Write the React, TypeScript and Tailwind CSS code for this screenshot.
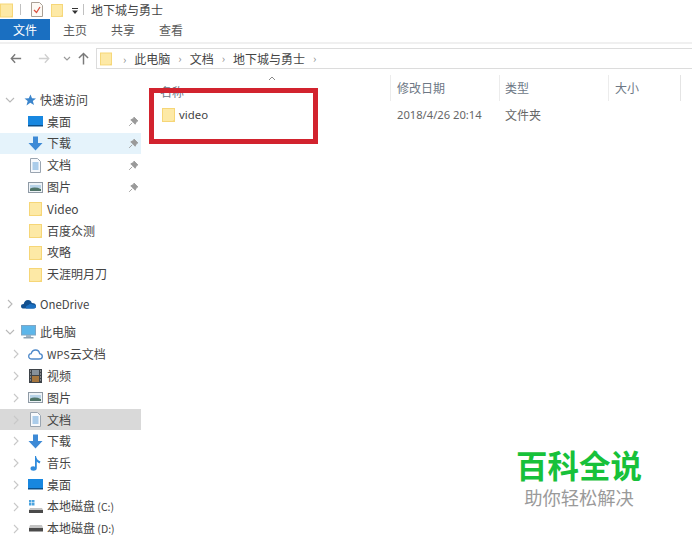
import React from "react";

const Folder = ({ w = 13, h = 15 }: { w?: number; h?: number }) => (
  <svg width={w} height={h} viewBox="0 0 13 15" className="shrink-0">
    <path d="M0 1 H13 V15 H0 Z" fill="#f6d677" />
    <path d="M1 2 H12 V13 L10.5 14 H1 Z" fill="#fde9a6" />
  </svg>
);
const Pin = () => (
  <svg width="11" height="11" viewBox="0 0 10 10">
    <path d="M5.5 1 L9 4.5 L7.8 5 L6.5 7.5 L2.5 3.5 L5 2.2 Z M3.8 6.2 L1 9" fill="#9a9a9a" stroke="#9a9a9a" strokeWidth="0.8" />
  </svg>
);
const Chevron = ({ open, c = "#b8b8b8" }: { open?: boolean; c?: string }) => (
  <svg width="10" height="10" viewBox="0 0 10 10">
    <path d={open ? "M1 3 L5 7 L9 3" : "M3 1 L7 5 L3 9"} fill="none" stroke={c} strokeWidth="1.1" />
  </svg>
);
const Desktop = () => (
  <svg width="15" height="13" viewBox="0 0 15 13"><rect x="0" y="1" width="15" height="10" fill="#1787e0" /><rect x="0" y="10" width="15" height="1.5" fill="#0b4f8a" /></svg>
);
const Down = () => (
  <svg width="15" height="15" viewBox="0 0 15 15"><path d="M5 0.5 H10 V7 H14.5 L7.5 14.5 L0.5 7 H5 Z" fill="#3d8ad6" /></svg>
);
const Doc = () => (
  <svg width="11" height="15" viewBox="0 0 11 15"><path d="M0.5 0.5 H7.5 L10.5 3.5 V14.5 H0.5 Z" fill="#f7f9fc" stroke="#9aa5b1" /><path d="M2.5 5 H8.5 M2.5 7 H8.5 M2.5 9 H8.5 M2.5 11 H8.5" stroke="#5f9fd8" /></svg>
);
const Pic = () => (
  <svg width="15" height="11" viewBox="0 0 15 11"><rect x="0.5" y="0.5" width="14" height="10" fill="#eef3f7" stroke="#8f9aa5" /><path d="M2 3 H13 V6 H2 Z" fill="#b8d3e8" /><path d="M2 9 V6.5 Q7 4.5 13 7 V9 Z" fill="#4f7467" /></svg>
);
const Star = () => (
  <svg width="12" height="12" viewBox="0 0 12 12" className="ml-[3px]"><path d="M6.5 0.5 L8 4.3 L12 4.5 L8.8 7 L10 11 L6.3 8.8 L2.5 11.5 L3.7 7 L0.5 4.5 L4.8 4.3 Z" fill="#3b85cc" /></svg>
);
const Cloud = () => (
  <svg width="15" height="10" viewBox="0 0 15 10"><path d="M3 9.5 Q0 9.5 0 7.2 Q0 5 2.7 5 Q3.6 1 7 1 Q10 1 10.8 4 Q15 4 15 7 Q15 9.5 12 9.5 Z" fill="#12508f" /><path d="M5 9.5 Q4 6.5 7.5 6 Q9.5 4 11.5 5.5 Q15 5.5 15 7.5 Q15 9.5 12 9.5 Z" fill="#1b6fc0" /></svg>
);
const Pc = () => (
  <svg width="15" height="14" viewBox="0 0 15 14"><rect x="0.5" y="0.5" width="14" height="9.5" fill="#5cb6ea" stroke="#7fa6c4" /><rect x="5" y="10" width="5" height="2" fill="#9fb4c4" /><rect x="2.5" y="12" width="10" height="1.5" fill="#8ea3b3" /></svg>
);
const WpsCloud = () => (
  <svg width="15" height="11" viewBox="0 0 15 11"><path d="M4 10 Q0.7 10 0.7 7.2 Q0.7 5 3.2 4.7 Q4.2 1 7.6 1 Q11 1 11.6 4.6 Q14.3 5 14.3 7.4 Q14.3 10 11 10 Z" fill="none" stroke="#4d88c9" strokeWidth="1.3" /></svg>
);
const Film = () => (
  <svg width="13" height="14" viewBox="0 0 13 14"><rect width="13" height="14" fill="#3e4349" /><rect x="3" y="1" width="7" height="5" fill="#86909a" /><rect x="3" y="7" width="7" height="6" fill="#a5763f" /><path d="M1 2 H2 M1 5 H2 M1 8 H2 M1 11 H2 M11 2 H12 M11 5 H12 M11 8 H12 M11 11 H12" stroke="#c9c9c9" /></svg>
);
const Music = () => (
  <svg width="11" height="15" viewBox="0 0 11 15"><path d="M5 0 H6 Q6.5 4 10.5 5.5 L9.5 7.5 Q7.5 6.5 6.8 5.5 V12 Q6.8 14.8 3.5 14.8 Q0.5 14.8 0.5 12.6 Q0.5 10.3 3.2 10.3 Q4.2 10.3 5 10.8 Z" fill="#2f8bdc" /></svg>
);
const DiskC = () => (
  <svg width="14" height="14" viewBox="0 0 14 14"><rect x="0" y="0" width="2.5" height="2.5" fill="#4aa3df" /><rect x="3" y="0" width="2.5" height="2.5" fill="#4aa3df" /><rect x="0" y="3" width="2.5" height="2.5" fill="#4aa3df" /><rect x="3" y="3" width="2.5" height="2.5" fill="#4aa3df" /><path d="M1 8 H13 L14 10 H0 Z" fill="#c4c4c4" /><rect x="0" y="10" width="14" height="3" fill="#4a4a4a" /></svg>
);
const DiskD = () => (
  <svg width="14" height="7" viewBox="0 0 14 7"><path d="M1 0 H13 L14 3 H0 Z" fill="#c4c4c4" /><rect x="0" y="3" width="14" height="3.5" fill="#4a4a4a" /></svg>
);

type RowProps = { icon: React.ReactNode; label: React.ReactNode; pin?: boolean; bg?: string; chev?: boolean };
const SubRow = ({ icon, label, pin, bg = "", chev }: RowProps) => (
  <div className={`h-[21.8px] flex items-center ${bg}`}>
    <div className="w-[28px] pl-[11px] flex items-center">{chev && <Chevron c="#c8c8c8" />}</div>
    <div className="w-[19px] flex items-center justify-center pr-[4px]">{icon}</div>
    <span className="flex-1 whitespace-nowrap">{label}</span>
    {pin && <span className="mr-[2px] flex"><Pin /></span>}
  </div>
);
const TopRow = ({ icon, label, open }: { icon: React.ReactNode; label: React.ReactNode; open?: boolean }) => (
  <div className="h-[21.8px] flex items-center">
    <div className="w-[21px] pl-[5px] flex items-center"><Chevron open={open} /></div>
    <div className="w-[19px] flex items-center justify-start">{icon}</div>
    <span className="whitespace-nowrap">{label}</span>
  </div>
);
const Sep = () => <span className="text-[#8a8a8a] mx-[8px] text-[11px]">›</span>;

export default function App() {
  return (
    <div
      className="relative w-[692px] h-[540px] overflow-hidden bg-white text-[12px] leading-none text-[#444]"
      style={{ fontFamily: '"Noto Sans CJK SC", "Noto Sans", sans-serif' }}
    >
      {/* title bar */}
      <div className="h-[19px] flex items-center">
        <Folder w={13} h={16} />
        <div className="ml-[7px] w-px h-[11px] bg-[#c0c0c0]" />
        <svg width="12" height="15" viewBox="0 0 12 15" className="ml-[10px]"><path d="M0.5 0.5 H8.5 L11.5 3.5 V14.5 H0.5 Z" fill="#fdfaf5" stroke="#a9a095" /><path d="M3 8 L5.5 10.5 L9 5" fill="none" stroke="#d9503f" strokeWidth="1.3" /></svg>
        <span className="ml-[8px] flex"><Folder w={12} h={16} /></span>
        <svg width="8" height="7" viewBox="0 0 8 7" className="ml-[8px] mt-[3px]"><path d="M1 0.5 H7" stroke="#333" /><path d="M1 2.5 H7 L4 6 Z" fill="#333" /></svg>
        <div className="ml-[4px] w-px h-[11px] bg-[#c0c0c0]" />
        <span className="ml-[7px]">地下城与勇士</span>
      </div>
      {/* ribbon tabs */}
      <div className="h-[21px] flex items-center text-[#5a5a5a]">
        <div className="w-[50px] h-full bg-[#1a6fc1] text-white flex items-center justify-center">文件</div>
        <span className="ml-[13px]">主页</span>
        <span className="ml-[24px]">共享</span>
        <span className="ml-[24px]">查看</span>
      </div>
      <div className="mt-[2px] h-[2px] bg-[#f0f0f0]" />
      {/* address bar */}
      <div className="mt-[4px] h-[21px] flex items-center">
        <svg width="12" height="11" viewBox="0 0 14 12" className="ml-[10px]"><path d="M6 1 L1.5 6 L6 11 M1.5 6 H13" fill="none" stroke="#7a7a7a" strokeWidth="1.6" /></svg>
        <svg width="12" height="11" viewBox="0 0 14 12" className="ml-[16px]"><path d="M8 1 L12.5 6 L8 11 M12.5 6 H1" fill="none" stroke="#d0d0d0" strokeWidth="1.6" /></svg>
        <svg width="8" height="5" viewBox="0 0 8 5" className="ml-[13px]"><path d="M1 1 L4 4 L7 1" fill="none" stroke="#9a9a9a" strokeWidth="1.2" /></svg>
        <svg width="11" height="13" viewBox="0 0 12 13" className="ml-[7px]"><path d="M1 6 L6 1 L11 6 M6 1 V13" fill="none" stroke="#7a7a7a" strokeWidth="1.6" /></svg>
        <div className="ml-[7px] flex-1 h-full border border-r-0 border-[#dcdcdc] flex items-center pl-[3px]">
          <Folder w={12} h={15} />
          <span className="ml-[3px]"><Sep /></span>
          <span>此电脑</span><Sep />
          <span>文档</span><Sep />
          <span>地下城与勇士</span><Sep />
        </div>
      </div>
      {/* main */}
      <div className="flex">
        <aside className="w-[141px] shrink-0 pt-[20px]">
          <TopRow icon={<Star />} label="快速访问" open />
          <SubRow icon={<Desktop />} label="桌面" pin />
          <SubRow icon={<Down />} label="下载" pin bg="bg-[#e5f3fb]" />
          <SubRow icon={<Doc />} label="文档" pin />
          <SubRow icon={<Pic />} label="图片" pin />
          <SubRow icon={<Folder />} label="Video" />
          <SubRow icon={<Folder />} label="百度众测" />
          <SubRow icon={<Folder />} label="攻略" />
          <SubRow icon={<Folder />} label="天涯明月刀" />
          <div className="h-[8px]" />
          <TopRow icon={<Cloud />} label={<span className="text-[11.4px]">OneDrive</span>} />
          <div className="h-[6.5px]" />
          <TopRow icon={<Pc />} label="此电脑" open />
          <SubRow icon={<WpsCloud />} label={<><span className="text-[10.8px]">WPS</span>云文档</>} chev />
          <SubRow icon={<Film />} label="视频" chev />
          <SubRow icon={<Pic />} label="图片" chev />
          <SubRow icon={<Doc />} label="文档" chev bg="bg-[#d9d9d9]" />
          <SubRow icon={<Down />} label="下载" chev />
          <SubRow icon={<Music />} label="音乐" chev />
          <SubRow icon={<Desktop />} label="桌面" chev />
          <SubRow icon={<DiskC />} label={<>本地磁盘<span className="text-[10.5px]"> (C:)</span></>} chev />
          <SubRow icon={<DiskD />} label={<>本地磁盘<span className="text-[10.5px]"> (D:)</span></>} chev />
        </aside>
        <main className="flex-1 text-[#666]">
          <div className="relative h-[5px]">
            <svg width="8" height="5" viewBox="0 0 8 5" className="absolute left-[127px] top-[7px]"><path d="M1 4 L4 1 L7 4" fill="none" stroke="#8a8a8a" /></svg>
          </div>
          <div className="h-[26px] mt-[1px] grid grid-cols-[250px_109px_109px_72px] text-[#6d7785]">
            <div className="pl-[19px] pt-[11px] border-r border-[#ececec]">名称</div>
            <div className="pl-[6px] flex items-center border-r border-[#ececec]">修改日期</div>
            <div className="pl-[5px] flex items-center border-r border-[#ececec]">类型</div>
            <div className="pl-[6px] flex items-center border-r border-[#e4e4e4]">大小</div>
          </div>
          <div className="h-[27px] grid grid-cols-[250px_109px_109px] items-center">
            <div className="pl-[21px] flex items-center">
              <Folder w={13} h={15} />
              <span className="ml-[4px] text-[11.4px] text-[#444]" style={{ fontFamily: '"Noto Sans", sans-serif' }}>video</span>
            </div>
            <div className="pl-[6px] text-[11.2px] whitespace-nowrap" style={{ fontFamily: '"Noto Sans", sans-serif' }}>2018/4/26 20:14</div>
            <div className="pl-[5px]">文件夹</div>
          </div>
        </main>
      </div>
      {/* red annotation */}
      <div className="absolute left-[149px] top-[88px] w-[169px] h-[56px] border-[5px] border-[#d2232e]" />
      {/* watermark */}
      <div className="absolute left-[516px] top-[445px] w-[126px] flex flex-col items-center">
        <div className="text-[31.5px] leading-[38px] font-bold text-[#17c13a] whitespace-nowrap">百科全说</div>
        <div className="mt-[3px] text-[18.3px] leading-[22px] text-[#9a9a9a] whitespace-nowrap">助你轻松解决</div>
      </div>
    </div>
  );
}
